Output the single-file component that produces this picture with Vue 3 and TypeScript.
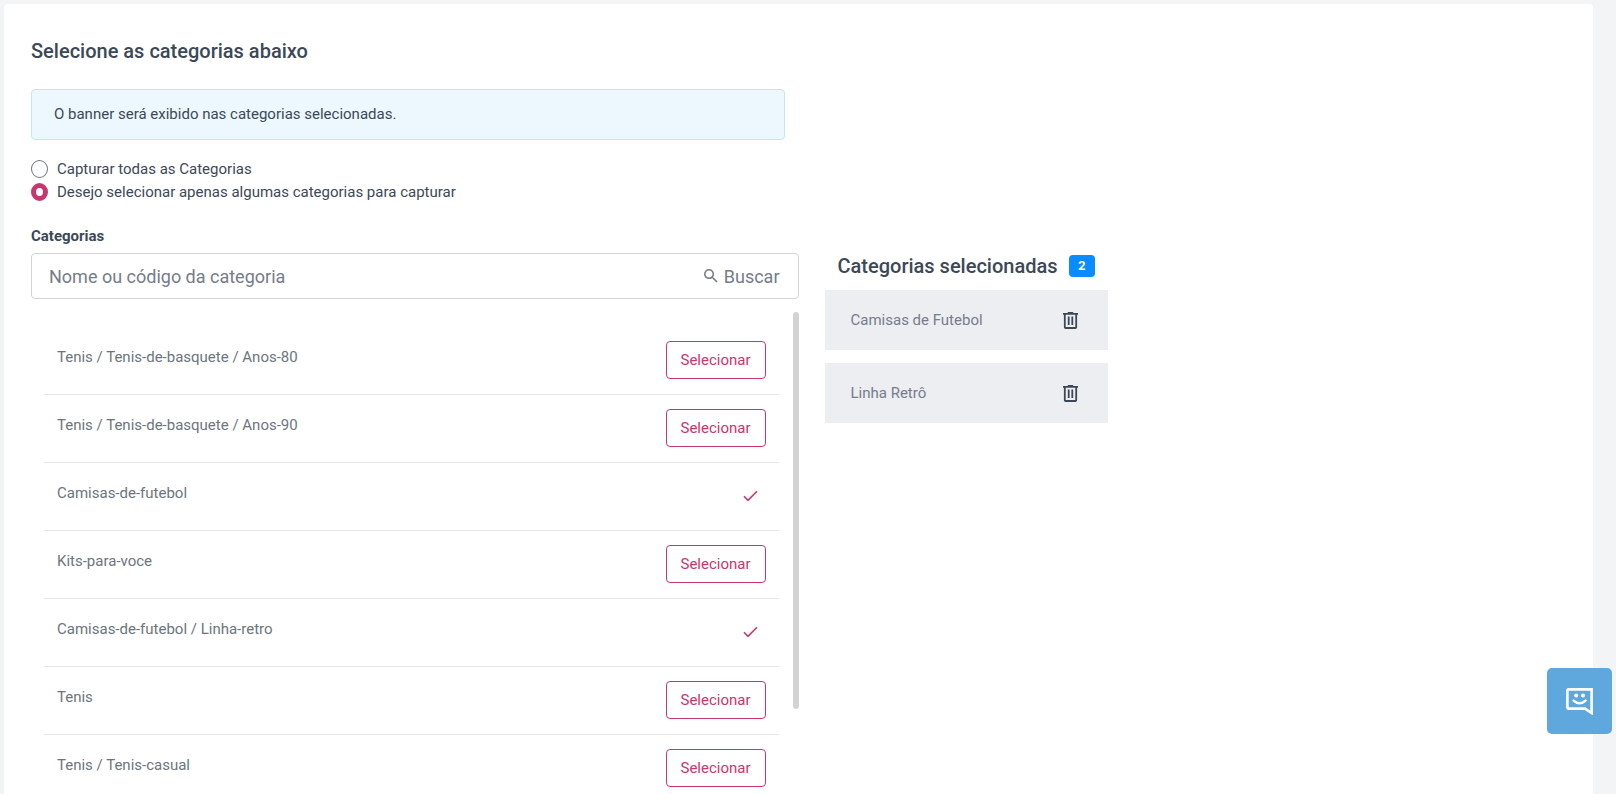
<script setup lang="ts">
import { computed, ref } from 'vue'

interface Category {
  id: number
  path: string
  label: string
}

const categories: Category[] = [
  { id: 1, path: 'Tenis / Tenis-de-basquete / Anos-80', label: 'Anos 80' },
  { id: 2, path: 'Tenis / Tenis-de-basquete / Anos-90', label: 'Anos 90' },
  { id: 3, path: 'Camisas-de-futebol', label: 'Camisas de Futebol' },
  { id: 4, path: 'Kits-para-voce', label: 'Kits para você' },
  { id: 5, path: 'Camisas-de-futebol / Linha-retro', label: 'Linha Retrô' },
  { id: 6, path: 'Tenis', label: 'Tenis' },
  { id: 7, path: 'Tenis / Tenis-casual', label: 'Tenis Casual' },
]

const mode = ref<'all' | 'some'>('some')
const query = ref('')
const selectedIds = ref<number[]>([3, 5])

const selected = computed(() => categories.filter((c) => selectedIds.value.includes(c.id)))

function add(id: number): void {
  selectedIds.value.push(id)
}

function remove(id: number): void {
  selectedIds.value = selectedIds.value.filter((s) => s !== id)
}
</script>

<template>
  <div class="page">
    <main class="card">
      <h2 class="title">Selecione as categorias abaixo</h2>
      <div class="alert">O banner será exibido nas categorias selecionadas.</div>

      <div class="modes" role="radiogroup" aria-label="Captura">
        <label class="mode">
          <input v-model="mode" class="radio" type="radio" name="mode" value="all" />
          <span>Capturar todas as Categorias</span>
        </label>
        <label class="mode">
          <input v-model="mode" class="radio" type="radio" name="mode" value="some" />
          <span>Desejo selecionar apenas algumas categorias para capturar</span>
        </label>
      </div>

      <div class="columns">
        <section class="picker">
          <label class="field-label" for="search">Categorias</label>
          <div class="search">
            <input id="search" v-model="query" class="search-input" type="text" placeholder="Nome ou código da categoria" />
            <button class="search-button" type="button">
              <svg class="search-icon" viewBox="3 3 18 18" aria-hidden="true">
                <path fill="currentColor" d="M15.5 14h-.79l-.28-.27A6.47 6.47 0 0 0 16 9.5 6.5 6.5 0 1 0 9.5 16c1.61 0 3.09-.59 4.23-1.57l.27.28v.79l5 4.99L20.49 19l-4.99-5zm-6 0C7.01 14 5 11.99 5 9.5S7.01 5 9.5 5 14 7.01 14 9.5 11.99 14 9.5 14z" />
              </svg>
              Buscar
            </button>
          </div>

          <div class="list-area">
            <ul class="list">
              <li v-for="c in categories" :key="c.id" class="row">
                <span class="row-name">{{ c.path }}</span>
                <span v-if="selectedIds.includes(c.id)" class="row-check">
                  <svg viewBox="0 0 15 12" width="15" height="12" aria-label="Selecionada">
                    <path d="M1 6.3 5 10.3 14 1.2" fill="none" stroke="currentColor" stroke-width="1.6" />
                  </svg>
                </span>
                <button v-else class="select-button" type="button" @click="add(c.id)">Selecionar</button>
              </li>
            </ul>
            <div class="scroll-thumb"></div>
          </div>
        </section>

        <section class="chosen">
          <h3 class="chosen-title">
            Categorias selecionadas
            <span class="badge">{{ selected.length }}</span>
          </h3>
          <ul class="chosen-list">
            <li v-for="c in selected" :key="c.id" class="chosen-item">
              <span>{{ c.label }}</span>
              <button class="trash" type="button" :aria-label="'Remover ' + c.label" @click="remove(c.id)">
                <svg viewBox="0 0 15 17" width="15" height="17" aria-hidden="true">
                  <path d="M0 1.8H15M4.8 1H10.2M1.8 2V15.2Q1.8 16 2.6 16H12.4Q13.2 16 13.2 15.2V2" fill="none" stroke="currentColor" stroke-width="1.8" />
                  <path d="M5.7 4.6V13M9.3 4.6V13" fill="none" stroke="currentColor" stroke-width="1.8" />
                </svg>
              </button>
            </li>
          </ul>
        </section>
      </div>
    </main>

    <button class="chat" type="button" aria-label="Enviar comentário">
      <svg viewBox="0 0 27 27" width="27" height="27" aria-hidden="true">
        <path d="M2.8 1.4H25.6V25L19 20.6H2.8Q1.4 20.6 1.4 19.2V2.8Q1.4 1.4 2.8 1.4Z" fill="none" stroke="currentColor" stroke-width="2.6" />
        <circle cx="10.2" cy="7.4" r="2" fill="currentColor" />
        <circle cx="17" cy="7.4" r="2" fill="currentColor" />
        <path d="M7.6 12.6Q13.6 18 19.6 12.6" fill="none" stroke="currentColor" stroke-width="2.4" stroke-linecap="round" />
      </svg>
    </button>
  </div>
</template>

<style>
body {
  margin: 0;
  background: #f3f4f6;
}
</style>

<style scoped>
.page {
  box-sizing: border-box;
  height: 100vh;
  overflow: hidden;
  padding: 4px 23px 0 4px;
  background: #f3f4f6;
  color: #3c4858;
  font-family: Roboto, "Liberation Sans", sans-serif;
  font-size: 15px;
  line-height: 23px;
}
.card {
  min-height: 100%;
  box-sizing: border-box;
  padding: 35px 27px 0;
  border-radius: 4px 4px 0 0;
  background: #fff;
}
.title,
.chosen-title {
  margin: 0;
  font-size: 20px;
  line-height: 24px;
  font-weight: 500;
}
.alert {
  box-sizing: border-box;
  width: calc(50% - 14px);
  margin-top: 26px;
  padding: 13px 22px;
  border: 1px solid #bfe9f2;
  border-radius: 4px;
  background: #ecf8fd;
}
.modes {
  margin-top: 18px;
}
.mode {
  display: flex;
  align-items: center;
  gap: 9px;
}
.radio {
  appearance: none;
  box-sizing: border-box;
  width: 17px;
  height: 18px;
  margin: 0 0 2px;
  border: 1px solid #6b7480;
  border-radius: 50%;
  background: #fff;
}
.radio:checked {
  border: 5px solid #c9356e;
}
.columns {
  display: flex;
  align-items: flex-start;
  gap: 26px;
  margin-top: 21px;
}
.picker {
  width: 50%;
}
.field-label {
  display: block;
  font-weight: 700;
}
.search {
  display: flex;
  align-items: center;
  box-sizing: border-box;
  height: 46px;
  margin-top: 5px;
  padding: 0 18px 0 17px;
  border: 1px solid #cfd2da;
  border-radius: 4px;
}
.search-input {
  flex: 1;
  min-width: 0;
  padding: 0;
  border: 0;
  outline: 0;
  background: none;
  color: #3c4858;
  font: inherit;
  font-size: 18px;
}
.search-input::placeholder {
  color: #757c8a;
  opacity: 1;
}
.search-button {
  display: flex;
  align-items: center;
  gap: 6px;
  padding: 0;
  border: 0;
  background: none;
  color: #757c8a;
  font: inherit;
  font-size: 18px;
}
.search-icon {
  width: 14px;
  height: 14px;
}
.list-area {
  display: flex;
  align-items: flex-start;
  gap: 14px;
  margin-top: 13px;
}
.list {
  flex: 1;
  margin: 0;
  padding: 15px 0 0 13px;
  list-style: none;
}
.row {
  display: flex;
  align-items: flex-start;
  justify-content: space-between;
  padding: 14px 13px 15px;
  border-bottom: 1px solid #e6e7ea;
  color: #6c757d;
}
.row-name {
  padding-top: 5px;
}
.select-button {
  box-sizing: border-box;
  width: 100px;
  height: 38px;
  padding: 0;
  border: 1px solid #c9356e;
  border-radius: 4px;
  background: #fff;
  color: #c9356e;
  font: inherit;
}
.row-check {
  display: flex;
  align-items: center;
  height: 38px;
  padding-right: 8px;
  color: #c9356e;
}
.scroll-thumb {
  width: 6px;
  height: 397px;
  border-radius: 3px;
  background: #d3d3d3;
}
.chosen {
  width: 283px;
}
.chosen-title {
  display: flex;
  align-items: center;
  justify-content: space-between;
  padding: 29px 13px 0;
  white-space: nowrap;
}
.badge {
  padding: 0 9px;
  border-radius: 4px;
  background: #0a8cff;
  color: #fff;
  font: 700 12px/22px Inter, sans-serif;
}
.chosen-list {
  display: grid;
  gap: 13px;
  margin: 12px 0 0;
  padding: 0;
  list-style: none;
}
.chosen-item {
  display: flex;
  align-items: center;
  justify-content: space-between;
  height: 60px;
  padding: 0 30px 0 26px;
  background: #edeef2;
  color: #757c8a;
}
.trash {
  display: flex;
  padding: 0;
  border: 0;
  background: none;
  color: #3c4858;
}
.chat {
  position: fixed;
  right: 4px;
  bottom: 60px;
  display: flex;
  align-items: center;
  justify-content: center;
  width: 65px;
  height: 66px;
  padding: 0;
  border: 0;
  border-radius: 5px;
  background: #5ea8dd;
  color: #fff;
}
</style>
